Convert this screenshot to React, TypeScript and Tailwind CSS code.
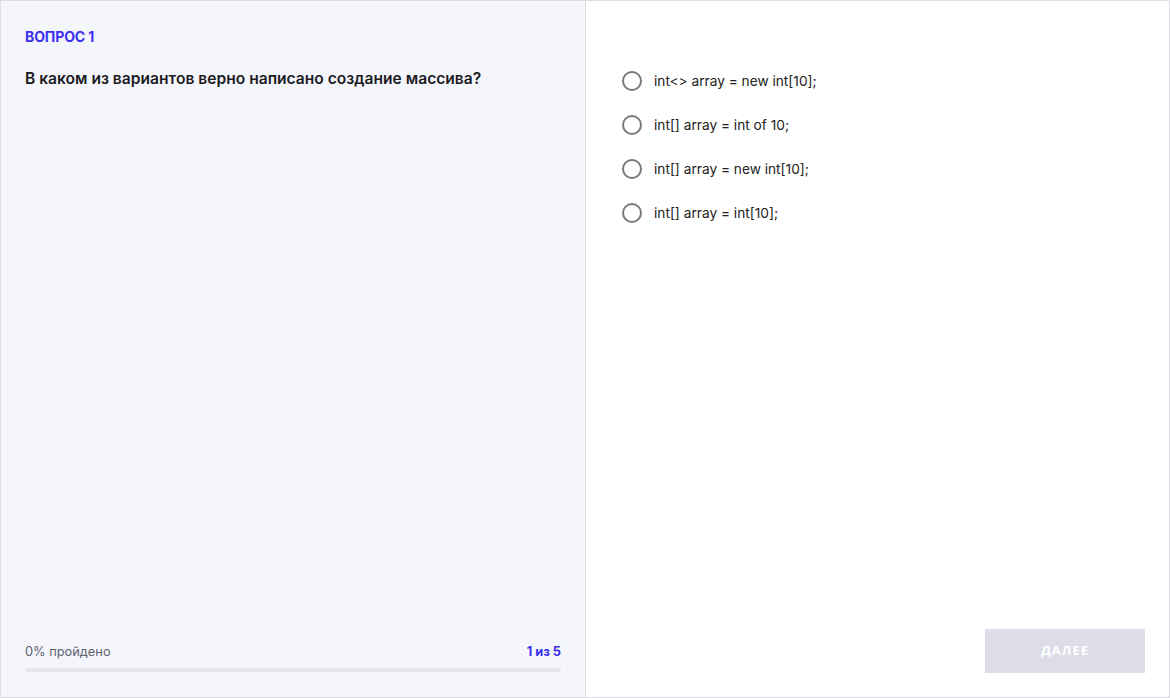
import React, { useState } from 'react';

const options = [
    'int<> array = new int[10];',
    'int[] array = int of 10;',
    'int[] array = new int[10];',
    'int[] array = int[10];',
];

export default function App() {
    const [selected, setSelected] = useState<number | null>(null);

    return (
        <div className="w-[1170px] h-[698px] flex border border-[#dcdde3] bg-white font-['Inter',sans-serif]">
            {/* Левая панель с вопросом */}
            <div className="w-[585px] shrink-0 flex flex-col bg-[#f5f6fb] border-r border-[#dcdde3] px-6 pt-[28px] pb-[25px]">
                <div className="text-[14px] leading-4 font-bold text-[#3a2ff0] tracking-[-0.1px]">ВОПРОС 1</div>
                <h2 className="mt-[24px] text-[15.6px] leading-5 font-semibold text-[#1b1b1f]">
                    В каком из вариантов верно написано создание массива?
                </h2>
                <div className="mt-auto">
                    <div className="flex justify-between items-center text-[12.8px] leading-4">
                        <span className="text-[#5d6170]">0% пройдено</span>
                        <span className="font-bold text-[#3a2ff0]">1 из 5</span>
                    </div>
                    <div className="mt-[8px] h-[4px] bg-[#e4e5ed] rounded-sm" />
                </div>
            </div>

            {/* Правая панель с вариантами */}
            <div className="flex-1 flex flex-col pl-[36px] pr-6 pt-[70px] pb-6">
                <div className="flex flex-col gap-6">
                    {options.map((opt, i) => (
                        <label key={i} className="flex items-center gap-3 cursor-pointer" onClick={() => setSelected(i)}>
                            <span className="w-5 h-5 rounded-full border-2 border-[#7a7a7a] flex items-center justify-center">
                                {selected === i && <span className="w-2.5 h-2.5 rounded-full bg-[#3a2ff0]" />}
                            </span>
                            <span className="text-[13.7px] leading-5 text-[#222]">{opt}</span>
                        </label>
                    ))}
                </div>
                <div className="mt-auto flex justify-end">
                    <button className="w-[160px] h-[44px] bg-[#dcdde6] text-white text-[13px] font-bold tracking-[1px] font-['Open_Sans',sans-serif]">
                        ДАЛЕЕ
                    </button>
                </div>
            </div>
        </div>
    );
}
